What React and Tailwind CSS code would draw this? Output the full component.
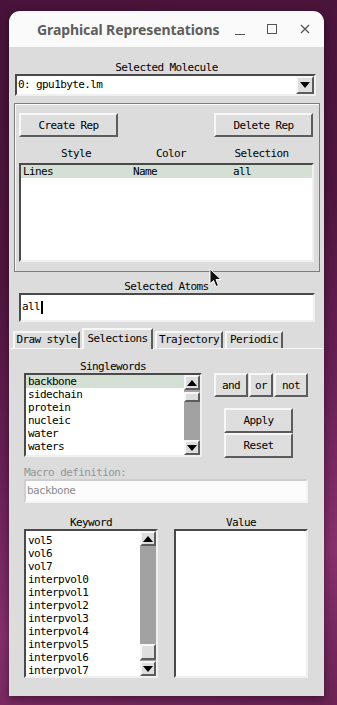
import React from 'react';

const mono = "font-['DejaVu_Sans_Mono','Liberation_Mono',monospace] text-[11px] tracking-[-0.6px] text-black";
const raised = 'bg-[#dedede] border-2 border-t-[#f7f7f7] border-l-[#f7f7f7] border-r-[#5c5c5c] border-b-[#5c5c5c]';
const sunken = 'border-2 border-t-[#4a4a4a] border-l-[#4a4a4a] border-r-[#f0f0f0] border-b-[#f0f0f0]';

function Arrow({ dir }) {
  return (
    <div className={`${raised} h-[15px] w-full flex items-center justify-center shrink-0`}>
      <svg width="10" height="6" viewBox="0 0 10 6">
        {dir === 'up' ? <polygon points="5,0 10,6 0,6" fill="#000" /> : <polygon points="0,0 10,0 5,6" fill="#000" />}
      </svg>
    </div>
  );
}

function ScrollBar({ thumbTop, thumbHeight }) {
  return (
    <div className="w-[16px] bg-[#a2a2a2] flex flex-col shrink-0">
      <Arrow dir="up" />
      <div className="shrink-0" style={{ height: thumbTop }} />
      <div className={`${raised} shrink-0`} style={{ height: thumbHeight }} />
      <div className="flex-1" />
      <Arrow dir="down" />
    </div>
  );
}

function ListBox({ items, selected, offset = 0, scroll, className }) {
  return (
    <div className={`${sunken} bg-white flex ${className}`}>
      <div className="flex-1 overflow-hidden">
        <div style={{ marginTop: offset }}>
          {items.map((it, i) => (
            <div key={it} className={`h-[13px] leading-[13px] pl-[2px] whitespace-nowrap ${i === selected ? 'bg-[#d3e0d3]' : ''}`}>
              {it}
            </div>
          ))}
        </div>
      </div>
      {scroll && <ScrollBar {...scroll} />}
    </div>
  );
}

function TkButton({ children, className }) {
  return (
    <div className={`${raised} flex items-center justify-center leading-none ${className}`}>{children}</div>
  );
}

function Tab({ label, active, className }) {
  return (
    <div
      className={`flex items-center justify-center border-l-2 border-t-2 border-r-2 border-l-[#f7f7f7] border-t-[#f7f7f7] border-r-[#5c5c5c] bg-[#dcdcdc] ${
        active ? 'h-[21px] relative z-10 -mb-[1px]' : 'h-[17px] self-end'
      } ${className}`}
    >
      {label}
    </div>
  );
}

export default function App() {
  const singlewords = ['backbone', 'sidechain', 'protein', 'nucleic', 'water', 'waters', 'vmd_fast_hydrogen'];
  const keywords = ['vol4', 'vol5', 'vol6', 'vol7', 'interpvol0', 'interpvol1', 'interpvol2', 'interpvol3', 'interpvol4', 'interpvol5', 'interpvol6', 'interpvol7'];

  return (
    <div className="relative w-[337px] h-[705px] overflow-hidden pt-[11px] pl-[9px] bg-[linear-gradient(165deg,#48133a_0%,#4f163f_35%,#6a2156_60%,#86306c_80%,#6c2254_100%)]">
      <div className="w-[315px] h-[685px] rounded-t-[11px] overflow-hidden flex flex-col shadow-[0_3px_10px_rgba(0,0,0,0.45)]">
        {/* title bar */}
        <div className="h-[36px] bg-[#fafafa] flex items-center pl-[28px] shrink-0">
          <span className="font-['Noto_Sans',sans-serif] font-bold text-[14px] text-[#5e5e5e] tracking-[-0.1px]">
            Graphical Representations
          </span>
          <div className="ml-auto flex items-center mr-[14px]">
            <svg width="10" height="10" viewBox="0 0 10 10" className="mr-[22px] mt-[4px]">
              <line x1="0" y1="8.5" x2="10" y2="8.5" stroke="#555" strokeWidth="1.2" />
            </svg>
            <svg width="10" height="10" viewBox="0 0 10 10" className="mr-[23px]">
              <rect x="0.5" y="0.5" width="9" height="9" fill="none" stroke="#555" strokeWidth="1" />
            </svg>
            <svg width="10" height="10" viewBox="0 0 10 10">
              <path d="M1 1 L9 9 M9 1 L1 9" stroke="#555" strokeWidth="1.3" />
            </svg>
          </div>
        </div>

        {/* body */}
        <div className={`flex-1 bg-[#dcdcdc] flex flex-col ${mono}`}>
          <div className="mt-[14px] h-[13px] leading-[13px] text-center">Selected Molecule</div>
          <div className={`ml-[6px] w-[301px] h-[22px] bg-white ${sunken} flex items-center`}>
            <span className="pl-[1px] flex-1">0: gpu1byte.lm</span>
            <div className={`${raised} w-[18px] h-[18px] flex items-center justify-center`}>
              <svg width="10" height="6" viewBox="0 0 10 6">
                <polygon points="0,0 10,0 5,6" fill="#000" />
              </svg>
            </div>
          </div>

          {/* reps frame */}
          <div className="mt-[7px] ml-[5px] w-[306px] h-[169px] border border-[#7c7c7c] shadow-[inset_1px_1px_0_#fafafa] flex flex-col">
            <div className="mt-[9px] flex justify-between pl-[4px] pr-[6px]">
              <TkButton className="w-[99px] h-[24px]">Create Rep</TkButton>
              <TkButton className="w-[99px] h-[24px]">Delete Rep</TkButton>
            </div>
            <div className="mt-[10px] h-[13px] leading-[13px] ml-[4px] flex">
              <span className="w-[114px] text-center">Style</span>
              <span className="w-[76px] text-center">Color</span>
              <span className="w-[105px] text-center">Selection</span>
            </div>
            <div className={`mt-[3px] ml-[4px] w-[295px] h-[99px] bg-white ${sunken}`}>
              <div className="h-[13px] leading-[13px] bg-[#d3e0d3] flex pl-[2px]">
                <span className="w-[110px]">Lines</span>
                <span className="w-[100px]">Name</span>
                <span>all</span>
              </div>
            </div>
          </div>

          <div className="mt-[9px] h-[12px] leading-[12px] text-center">Selected Atoms</div>
          <div className={`ml-[10px] w-[296px] h-[29px] bg-white ${sunken} flex items-center pl-[1px]`}>
            <span>all</span>
            <span className="w-[2px] h-[13px] bg-black ml-[1px]" />
          </div>

          {/* tabs */}
          <div className="mt-[6px] h-[20px] flex pl-[4px]">
            <Tab label="Draw style" className="w-[67px]" />
            <Tab label="Selections" active className="w-[71px] ml-[2px]" />
            <Tab label="Trajectory" className="w-[68px] ml-[2px]" />
            <Tab label="Periodic" className="w-[58px] ml-[2px]" />
          </div>
          <div className="flex-1 border-t border-t-[#f7f7f7] mx-[1px] flex flex-col">
            <div className="mt-[11px] flex">
              <div className="ml-[14px] w-[178px] flex flex-col">
                <div className="h-[13px] leading-[13px] text-center">Singlewords</div>
                <ListBox
                  items={singlewords}
                  selected={0}
                  className="h-[84px]"
                  scroll={{ thumbTop: 2, thumbHeight: 10 }}
                />
              </div>
              <div className="ml-[12px] flex flex-col mt-[13px]">
                <div className="flex gap-[1px]">
                  <TkButton className="w-[34px] h-[24px]">and</TkButton>
                  <TkButton className="w-[24px] h-[24px]">or</TkButton>
                  <TkButton className="w-[34px] h-[24px]">not</TkButton>
                </div>
                <TkButton className="mt-[11px] ml-[10px] w-[69px] h-[25px]">Apply</TkButton>
                <TkButton className="ml-[10px] w-[69px] h-[25px]">Reset</TkButton>
              </div>
            </div>

            <div className="mt-[9px] ml-[14px] h-[12px] leading-[12px] text-[#969696]">Macro definition:</div>
            <div className="ml-[14px] w-[284px] h-[24px] bg-[#fcfcfc] border-2 border-t-[#cfcfcf] border-l-[#cfcfcf] border-r-[#f4f4f4] border-b-[#f4f4f4] flex items-center text-[#8c8c8c]">
              <span className="pl-[1px]">backbone</span>
            </div>

            <div className="mt-[14px] ml-[14px] flex gap-[16px]">
              <div className="w-[134px] flex flex-col">
                <div className="h-[12px] leading-[12px] text-center">Keyword</div>
                <ListBox
                  items={keywords}
                  offset={-10}
                  className="h-[149px]"
                  scroll={{ thumbTop: 98, thumbHeight: 16 }}
                />
              </div>
              <div className="w-[134px] flex flex-col">
                <div className="h-[12px] leading-[12px] text-center">Value</div>
                <div className={`h-[149px] bg-white ${sunken}`} />
              </div>
            </div>
          </div>
        </div>
      </div>

      {/* mouse pointer */}
      <svg className="absolute left-[209px] top-[268px]" width="13" height="20" viewBox="0 0 13 20">
        <path d="M1 1 L1 16 L4.5 12.5 L7 18.5 L9.5 17.5 L7 11.5 L12 11.5 Z" fill="#111" stroke="#fff" strokeWidth="1" strokeLinejoin="round" />
      </svg>
    </div>
  );
}
